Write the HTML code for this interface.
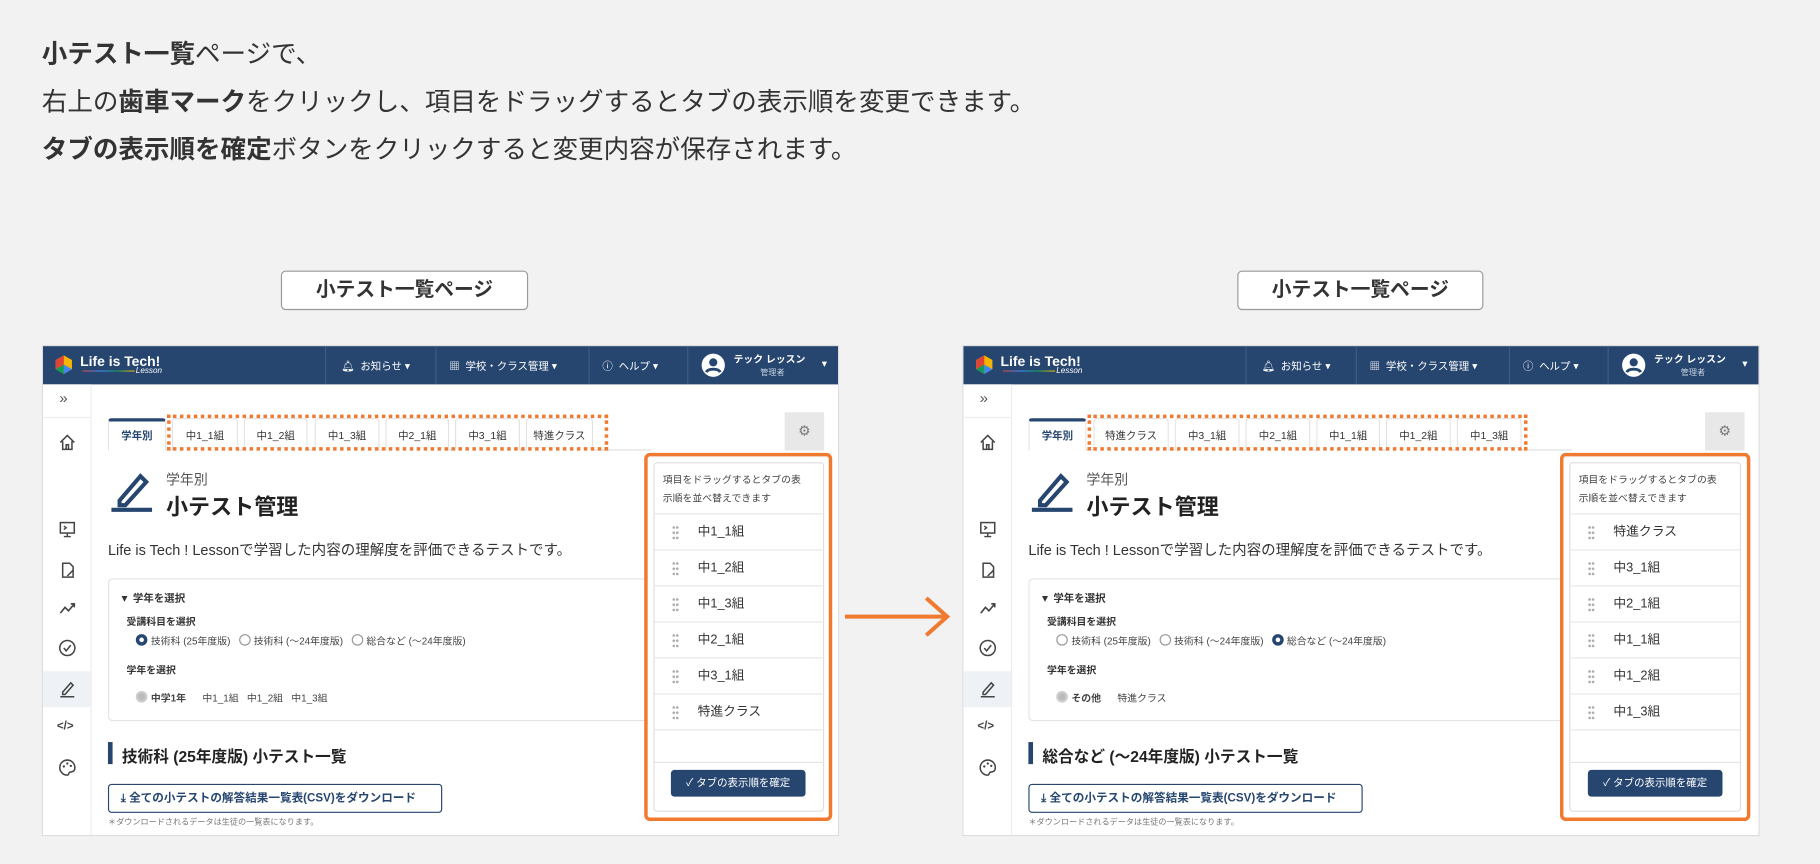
<!DOCTYPE html>
<html><head><meta charset="utf-8">
<style>
*{box-sizing:border-box;margin:0;padding:0}
html,body{width:1820px;height:864px;overflow:hidden;background:#f2f2f2}
body{font-family:"Liberation Sans","Noto Sans CJK JP",sans-serif;color:#333}
#wrap{position:absolute;left:0;top:0;width:1568px;height:744px;transform:scale(1.16071,1.16129);transform-origin:0 0}
.a{position:absolute;white-space:nowrap}
.intro{left:36px;font-size:22px;color:#333;line-height:1}
.intro b{font-weight:700}
.lbl{border:1.5px solid #999;border-radius:4px;background:#fff;font-size:17px;font-weight:700;color:#333;text-align:center;line-height:31px;height:34px}
.frame{position:absolute;top:297px;width:687px;height:423px;background:#fff;border:1px solid #ddd;overflow:hidden}
.hdr{position:absolute;left:0;top:0;width:100%;height:33px;background:#264670;color:#fff;font-size:9px}
.hdr .d{position:absolute;top:0;width:1px;height:33px;background:#3d5b86}
.side{position:absolute;left:0;top:33px;width:42px;height:390px;background:#fff;border-right:1px solid #eee}
.ic{position:absolute;left:13px;width:16px;height:16px}
.tab{position:absolute;top:62px;height:28px;border:1px solid #e2e2e2;border-bottom:none;border-radius:3px 3px 0 0;font-size:9px;color:#333;text-align:center;line-height:28px;background:#fff}
.dot{position:absolute;border:3px dotted #f07a30}
.panel{position:absolute;border:3px solid #f07a30;border-radius:5px;background:#fff}
.item{position:absolute;left:5px;width:147px;height:31px;border-top:1px solid #e6e6e6;font-size:11px;line-height:31px;padding-left:38px;color:#333}
.grip{position:absolute;left:16px;top:9px;width:6px;height:13px;background:radial-gradient(circle,#aaa 1px,transparent 1.3px) 0 0/3px 4.5px}
.rad{display:inline-block;width:10px;height:10px;border:1px solid #999;border-radius:50%;vertical-align:-1px;margin-right:3px}
.rad.on{border:3px solid #264670;background:#fff}
</style></head><body><div id="wrap">

<div class="a intro" style="top:36px"><b>小テスト一覧</b>ページで、</div>
<div class="a intro" style="top:77px">右上の<b>歯車マーク</b>をクリックし、項目をドラッグするとタブの表示順を変更できます。</div>
<div class="a intro" style="top:118px"><b>タブの表示順を確定</b>ボタンをクリックすると変更内容が保存されます。</div>

<div class="a lbl" style="left:242px;top:233px;width:213px">小テスト一覧ページ</div>
<div class="a lbl" style="left:1066px;top:233px;width:212px">小テスト一覧ページ</div>

<svg class="a" style="left:726px;top:512px" width="95" height="40"><path d="M2 19H90M72 3L90 19L72 35" stroke="#f07a30" stroke-width="3.5" fill="none"/></svg>

<!-- FRAME LEFT -->
<div class="frame" style="left:36px">
 <div class="hdr">
  <svg class="a" style="left:10px;top:7px" width="16" height="18"><path d="M8 1L15 5V13L8 17L1 13V5Z" fill="#f4b400"/><path d="M8 1L1 5V13L8 9Z" fill="#db4437"/><path d="M8 9L15 13L8 17Z" fill="#4285f4"/><path d="M8 9L1 13L8 17Z" fill="#0f9d58"/></svg>
  <div class="a" style="left:32px;top:6px;font-size:12px;font-weight:700">Life is Tech!</div>
  <div class="a" style="left:34px;top:21px;width:45px;height:1px;background:linear-gradient(90deg,#db4437,#4285f4,#0f9d58,#f4b400)"></div>
  <div class="a" style="left:80px;top:18px;font-size:7px;font-style:italic">Lesson</div>
  <div class="d" style="left:243px"></div><div class="d" style="left:338px"></div><div class="d" style="left:470px"></div><div class="d" style="left:555px"></div>
  <div class="a" style="left:257px;top:10px">🔔︎ &nbsp;お知らせ ▾</div>
  <div class="a" style="left:350px;top:10px">▦ &nbsp;学校・クラス管理 ▾</div>
  <div class="a" style="left:482px;top:10px">ⓘ &nbsp;ヘルプ ▾</div>
  <svg class="a" style="left:567px;top:6px" width="21" height="21"><circle cx="10.5" cy="10.5" r="10" fill="#fff"/><circle cx="10.5" cy="8" r="3.5" fill="#264670"/><path d="M4.5 16.5C6 13 15 13 16.5 16.5" stroke="#264670" stroke-width="2.5" fill="none"/></svg>
  <div class="a" style="left:595px;top:5px;font-weight:700;font-size:8.5px">テック レッスン</div>
  <div class="a" style="left:618px;top:18px;font-size:7px;color:#c8d2e0">管理者</div>
  <div class="a" style="left:671px;top:10px">▾</div>
 </div>
 <div class="side">
  <div class="a" style="left:14px;top:4px;font-size:13px;color:#555">»</div>
  <div class="a" style="left:0;top:28px;width:41px;height:1px;background:#eee"></div>
  <svg class="ic" style="top:42px" viewBox="0 0 16 16"><path d="M2 8L8 2L14 8M4 7V14H12V7M7 14V10H9V14" stroke="#444" fill="none" stroke-width="1.3"/></svg>
  <svg class="ic" style="top:117px" viewBox="0 0 16 16"><rect x="2" y="2" width="12" height="9" stroke="#444" fill="none" stroke-width="1.3"/><path d="M5 5L7 6.5L5 8M8 11V14M5 14H11" stroke="#444" fill="none" stroke-width="1.2"/></svg>
  <svg class="ic" style="top:152px" viewBox="0 0 16 16"><path d="M4 2H10L13 5V14H4Z" stroke="#444" fill="none" stroke-width="1.3"/><path d="M8 13L13 8" stroke="#444" stroke-width="1.3"/></svg>
  <svg class="ic" style="top:185px" viewBox="0 0 16 16"><path d="M2 12L6 7L9 10L14 4M11 4H14V7" stroke="#444" fill="none" stroke-width="1.4"/></svg>
  <svg class="ic" style="top:219px" viewBox="0 0 16 16"><circle cx="8" cy="8" r="6.5" stroke="#444" fill="none" stroke-width="1.3"/><path d="M5 8L7 10.5L11 5.5" stroke="#444" fill="none" stroke-width="1.3"/></svg>
  <div class="a" style="left:0;top:247px;width:41px;height:31px;background:#eef1f5"></div>
  <svg class="ic" style="top:254px" viewBox="0 0 16 16"><path d="M4 11L11 3L13 5L6 13H4ZM2 15H14" stroke="#444" fill="none" stroke-width="1.3"/></svg>
  <div class="a" style="left:12px;top:289px;font-size:10px;color:#444;font-weight:700">&lt;/&gt;</div>
  <svg class="ic" style="top:322px" viewBox="0 0 16 16"><path d="M8 1.5A6.5 6.5 0 1 0 8 14.5C9.5 14.5 9 12.5 10 12C11.5 11.5 14.5 12 14.5 8A6.5 6.5 0 0 0 8 1.5Z" stroke="#444" fill="none" stroke-width="1.3"/><circle cx="5" cy="7" r="1" fill="#444"/><circle cx="8" cy="4.5" r="1" fill="#444"/><circle cx="11" cy="6.5" r="1" fill="#444"/></svg>
 </div>
 <div class="a" style="left:56px;top:89px;width:468px;height:1px;background:#ddd"></div>
 <div class="tab" style="left:56px;width:50px;border-top:3px solid #264670;color:#264670;font-weight:700;line-height:24px">学年別</div>
 <div class="tab" style="left:111px;width:57px">中1_1組</div>
 <div class="tab" style="left:173px;width:55px">中1_2組</div>
 <div class="tab" style="left:234px;width:56px">中1_3組</div>
 <div class="tab" style="left:295px;width:55px">中2_1組</div>
 <div class="tab" style="left:355px;width:56px">中3_1組</div>
 <div class="tab" style="left:416px;width:58px">特進クラス</div>
 <div class="dot" style="left:107px;top:59px;width:380px;height:31px"></div>
 <div class="a" style="left:639px;top:57px;width:34px;height:33px;background:#e8e8e8;text-align:center;line-height:33px;font-size:12px;color:#777">⚙</div>
 <svg class="a" style="left:58px;top:107px" width="38" height="36"><path d="M8 26L26 5L31 10L13 30H8Z" stroke="#264670" stroke-width="3.5" fill="none"/><path d="M1 34H36" stroke="#264670" stroke-width="3.5"/></svg>
 <div class="a" style="left:106px;top:106px;font-size:12px;color:#555">学年別</div>
 <div class="a" style="left:106px;top:124px;font-size:19px;font-weight:700;color:#222">小テスト管理</div>
 <div class="a" style="left:56px;top:165px;font-size:12.5px;color:#333">Life is Tech ! Lessonで学習した内容の理解度を評価できるテストです。</div>
 <div class="a" style="left:56px;top:200px;width:480px;height:123px;border:1px solid #e4e4e4;border-radius:4px"></div>
 <div class="a" style="left:68px;top:210px;font-size:9px;font-weight:700">▾ &nbsp;学年を選択</div>
 <div class="a" style="left:72px;top:231px;font-size:8.5px;font-weight:700">受講科目を選択</div>
 <div class="a" style="left:80px;top:248px;font-size:8.5px;color:#444"><span class="rad on"></span>技術科 (25年度版) &nbsp;&nbsp;<span class="rad"></span>技術科 (〜24年度版) &nbsp;&nbsp;<span class="rad"></span>総合など (〜24年度版)</div>
 <div class="a" style="left:72px;top:273px;font-size:8.5px;font-weight:700">学年を選択</div>
 <div class="a" style="left:80px;top:297px;font-size:8.5px;color:#444"><span class="rad" style="background:#bbb;border:2px solid #ccc"></span><b>中学1年</b> &nbsp;&nbsp;&nbsp;&nbsp; 中1_1組 &nbsp;&nbsp;中1_2組 &nbsp;&nbsp;中1_3組</div>
 <div class="a" style="left:56px;top:341px;width:4px;height:19px;background:#264670"></div>
 <div class="a" style="left:68px;top:342px;font-size:13.5px;font-weight:700;color:#222">技術科 (25年度版) 小テスト一覧</div>
 <div class="a" style="left:56px;top:377px;width:288px;height:25px;border:1px solid #264670;border-radius:3px;font-size:10px;font-weight:700;color:#264670;line-height:23px;padding-left:10px">⤓ 全ての小テストの解答結果一覧表(CSV)をダウンロード</div>
 <div class="a" style="left:56px;top:405px;font-size:7px;color:#777">＊ダウンロードされるデータは生徒の一覧表になります。</div>
 <div class="panel" style="left:518px;top:92px;width:162px;height:317px">
  <div class="a" style="left:5px;top:5px;width:147px;height:301px;border:1px solid #ddd;border-radius:3px"></div>
  <div class="a" style="left:13px;top:12px;font-size:8.5px;line-height:16px;color:#444">項目をドラッグするとタブの表<br>示順を並べ替えできます</div>
  <div class="item" style="top:49px"><span class="grip"></span>中1_1組</div>
  <div class="item" style="top:80px"><span class="grip"></span>中1_2組</div>
  <div class="item" style="top:111px"><span class="grip"></span>中1_3組</div>
  <div class="item" style="top:142px"><span class="grip"></span>中2_1組</div>
  <div class="item" style="top:173px"><span class="grip"></span>中3_1組</div>
  <div class="item" style="top:204px"><span class="grip"></span>特進クラス</div>
  <div class="item" style="top:235px;height:28px"></div>
  <div class="item" style="top:263px;height:2px"></div>
  <div class="a" style="left:20px;top:270px;width:116px;height:23px;background:#264670;border-radius:3px;color:#fff;font-size:9px;text-align:center;line-height:23px">✓ タブの表示順を確定</div>
 </div>
</div>

<!-- FRAME RIGHT -->
<div class="frame" style="left:829px">
 <div class="hdr">
  <svg class="a" style="left:10px;top:7px" width="16" height="18"><path d="M8 1L15 5V13L8 17L1 13V5Z" fill="#f4b400"/><path d="M8 1L1 5V13L8 9Z" fill="#db4437"/><path d="M8 9L15 13L8 17Z" fill="#4285f4"/><path d="M8 9L1 13L8 17Z" fill="#0f9d58"/></svg>
  <div class="a" style="left:32px;top:6px;font-size:12px;font-weight:700">Life is Tech!</div>
  <div class="a" style="left:34px;top:21px;width:45px;height:1px;background:linear-gradient(90deg,#db4437,#4285f4,#0f9d58,#f4b400)"></div>
  <div class="a" style="left:80px;top:18px;font-size:7px;font-style:italic">Lesson</div>
  <div class="d" style="left:243px"></div><div class="d" style="left:338px"></div><div class="d" style="left:470px"></div><div class="d" style="left:555px"></div>
  <div class="a" style="left:257px;top:10px">🔔︎ &nbsp;お知らせ ▾</div>
  <div class="a" style="left:350px;top:10px">▦ &nbsp;学校・クラス管理 ▾</div>
  <div class="a" style="left:482px;top:10px">ⓘ &nbsp;ヘルプ ▾</div>
  <svg class="a" style="left:567px;top:6px" width="21" height="21"><circle cx="10.5" cy="10.5" r="10" fill="#fff"/><circle cx="10.5" cy="8" r="3.5" fill="#264670"/><path d="M4.5 16.5C6 13 15 13 16.5 16.5" stroke="#264670" stroke-width="2.5" fill="none"/></svg>
  <div class="a" style="left:595px;top:5px;font-weight:700;font-size:8.5px">テック レッスン</div>
  <div class="a" style="left:618px;top:18px;font-size:7px;color:#c8d2e0">管理者</div>
  <div class="a" style="left:671px;top:10px">▾</div>
 </div>
 <div class="side">
  <div class="a" style="left:14px;top:4px;font-size:13px;color:#555">»</div>
  <div class="a" style="left:0;top:28px;width:41px;height:1px;background:#eee"></div>
  <svg class="ic" style="top:42px" viewBox="0 0 16 16"><path d="M2 8L8 2L14 8M4 7V14H12V7M7 14V10H9V14" stroke="#444" fill="none" stroke-width="1.3"/></svg>
  <svg class="ic" style="top:117px" viewBox="0 0 16 16"><rect x="2" y="2" width="12" height="9" stroke="#444" fill="none" stroke-width="1.3"/><path d="M5 5L7 6.5L5 8M8 11V14M5 14H11" stroke="#444" fill="none" stroke-width="1.2"/></svg>
  <svg class="ic" style="top:152px" viewBox="0 0 16 16"><path d="M4 2H10L13 5V14H4Z" stroke="#444" fill="none" stroke-width="1.3"/><path d="M8 13L13 8" stroke="#444" stroke-width="1.3"/></svg>
  <svg class="ic" style="top:185px" viewBox="0 0 16 16"><path d="M2 12L6 7L9 10L14 4M11 4H14V7" stroke="#444" fill="none" stroke-width="1.4"/></svg>
  <svg class="ic" style="top:219px" viewBox="0 0 16 16"><circle cx="8" cy="8" r="6.5" stroke="#444" fill="none" stroke-width="1.3"/><path d="M5 8L7 10.5L11 5.5" stroke="#444" fill="none" stroke-width="1.3"/></svg>
  <div class="a" style="left:0;top:247px;width:41px;height:31px;background:#eef1f5"></div>
  <svg class="ic" style="top:254px" viewBox="0 0 16 16"><path d="M4 11L11 3L13 5L6 13H4ZM2 15H14" stroke="#444" fill="none" stroke-width="1.3"/></svg>
  <div class="a" style="left:12px;top:289px;font-size:10px;color:#444;font-weight:700">&lt;/&gt;</div>
  <svg class="ic" style="top:322px" viewBox="0 0 16 16"><path d="M8 1.5A6.5 6.5 0 1 0 8 14.5C9.5 14.5 9 12.5 10 12C11.5 11.5 14.5 12 14.5 8A6.5 6.5 0 0 0 8 1.5Z" stroke="#444" fill="none" stroke-width="1.3"/><circle cx="5" cy="7" r="1" fill="#444"/><circle cx="8" cy="4.5" r="1" fill="#444"/><circle cx="11" cy="6.5" r="1" fill="#444"/></svg>
 </div>
 <div class="a" style="left:56px;top:89px;width:468px;height:1px;background:#ddd"></div>
 <div class="tab" style="left:56px;width:50px;border-top:3px solid #264670;color:#264670;font-weight:700;line-height:24px">学年別</div>
 <div class="tab" style="left:112px;width:65px">特進クラス</div>
 <div class="tab" style="left:182px;width:56px">中3_1組</div>
 <div class="tab" style="left:243px;width:56px">中2_1組</div>
 <div class="tab" style="left:304px;width:55px">中1_1組</div>
 <div class="tab" style="left:364px;width:56px">中1_2組</div>
 <div class="tab" style="left:425px;width:56px">中1_3組</div>
 <div class="dot" style="left:107px;top:59px;width:379px;height:31px"></div>
 <div class="a" style="left:639px;top:57px;width:34px;height:33px;background:#e8e8e8;text-align:center;line-height:33px;font-size:12px;color:#777">⚙</div>
 <svg class="a" style="left:58px;top:107px" width="38" height="36"><path d="M8 26L26 5L31 10L13 30H8Z" stroke="#264670" stroke-width="3.5" fill="none"/><path d="M1 34H36" stroke="#264670" stroke-width="3.5"/></svg>
 <div class="a" style="left:106px;top:106px;font-size:12px;color:#555">学年別</div>
 <div class="a" style="left:106px;top:124px;font-size:19px;font-weight:700;color:#222">小テスト管理</div>
 <div class="a" style="left:56px;top:165px;font-size:12.5px;color:#333">Life is Tech ! Lessonで学習した内容の理解度を評価できるテストです。</div>
 <div class="a" style="left:56px;top:200px;width:480px;height:123px;border:1px solid #e4e4e4;border-radius:4px"></div>
 <div class="a" style="left:68px;top:210px;font-size:9px;font-weight:700">▾ &nbsp;学年を選択</div>
 <div class="a" style="left:72px;top:231px;font-size:8.5px;font-weight:700">受講科目を選択</div>
 <div class="a" style="left:80px;top:248px;font-size:8.5px;color:#444"><span class="rad"></span>技術科 (25年度版) &nbsp;&nbsp;<span class="rad"></span>技術科 (〜24年度版) &nbsp;&nbsp;<span class="rad on"></span>総合など (〜24年度版)</div>
 <div class="a" style="left:72px;top:273px;font-size:8.5px;font-weight:700">学年を選択</div>
 <div class="a" style="left:80px;top:297px;font-size:8.5px;color:#444"><span class="rad" style="background:#bbb;border:2px solid #ccc"></span><b>その他</b> &nbsp;&nbsp;&nbsp;&nbsp; 特進クラス</div>
 <div class="a" style="left:56px;top:341px;width:4px;height:19px;background:#264670"></div>
 <div class="a" style="left:68px;top:342px;font-size:13.5px;font-weight:700;color:#222">総合など (〜24年度版) 小テスト一覧</div>
 <div class="a" style="left:56px;top:377px;width:288px;height:25px;border:1px solid #264670;border-radius:3px;font-size:10px;font-weight:700;color:#264670;line-height:23px;padding-left:10px">⤓ 全ての小テストの解答結果一覧表(CSV)をダウンロード</div>
 <div class="a" style="left:56px;top:405px;font-size:7px;color:#777">＊ダウンロードされるデータは生徒の一覧表になります。</div>
 <div class="panel" style="left:514px;top:92px;width:164px;height:317px">
  <div class="a" style="left:5px;top:5px;width:148px;height:301px;border:1px solid #ddd;border-radius:3px"></div>
  <div class="a" style="left:13px;top:12px;font-size:8.5px;line-height:16px;color:#444">項目をドラッグするとタブの表<br>示順を並べ替えできます</div>
  <div class="item" style="top:49px"><span class="grip"></span>特進クラス</div>
  <div class="item" style="top:80px"><span class="grip"></span>中3_1組</div>
  <div class="item" style="top:111px"><span class="grip"></span>中2_1組</div>
  <div class="item" style="top:142px"><span class="grip"></span>中1_1組</div>
  <div class="item" style="top:173px"><span class="grip"></span>中1_2組</div>
  <div class="item" style="top:204px"><span class="grip"></span>中1_3組</div>
  <div class="item" style="top:235px;height:28px"></div>
  <div class="item" style="top:263px;height:2px"></div>
  <div class="a" style="left:21px;top:270px;width:116px;height:23px;background:#264670;border-radius:3px;color:#fff;font-size:9px;text-align:center;line-height:23px">✓ タブの表示順を確定</div>
 </div>
</div>

</div></body></html>
